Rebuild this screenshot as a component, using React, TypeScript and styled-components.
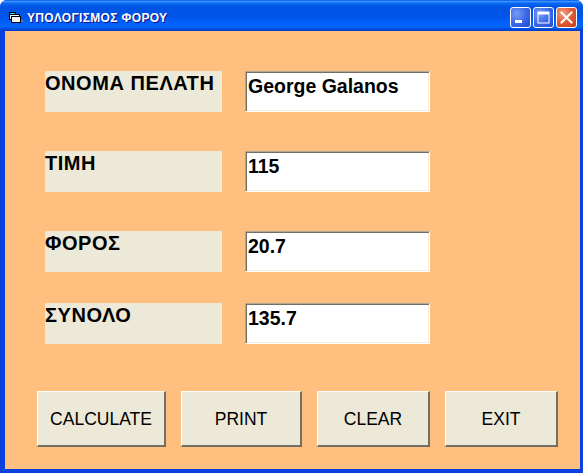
import React from "react";
import styled, { createGlobalStyle } from "styled-components";

const Global = createGlobalStyle`
  html, body { margin: 0; padding: 0; background: #fff; }
  * { box-sizing: border-box; }
`;

const Win = styled.div`
  width: 583px;
  height: 473px;
  display: flex;
  flex-direction: column;
  overflow: hidden;
  background: #0831d9;
  border-radius: 7px 7px 0 0;
  font-family: "Liberation Sans", Arial, sans-serif;
`;

const TitleBar = styled.div`
  height: 31px;
  flex: none;
  display: flex;
  align-items: center;
  padding: 4px 6px 0 8px;
  background: linear-gradient(180deg, #0058ee 0%, #3d95ff 5%, #0a6af0 10%, #0054e3 22%, #0055ea 55%, #0064ff 78%, #0061f7 88%, #0043cf 96%, #003dd7 100%);
`;

const TitleText = styled.span`
  margin-left: 3px;
  flex: 1;
  color: #fff;
  font-size: 12px;
  font-weight: 700;
  letter-spacing: 0.35px;
  text-shadow: 1px 1px 0 #0f1089;
  white-space: nowrap;
`;

const Controls = styled.div`
  display: flex;
  gap: 2px;
`;

const Ctl = styled.div<{ $close?: boolean }>`
  width: 21px;
  height: 21px;
  border: 1px solid #fff;
  border-radius: 3px;
  display: flex;
  background: ${(p) =>
    p.$close
      ? "radial-gradient(circle at 30% 30%, #f0a088 0%, #e2603c 45%, #c63a12 100%)"
      : "radial-gradient(circle at 30% 30%, #7a9cf5 0%, #3c6ae8 50%, #2148cf 100%)"};
`;

const Edge = styled.div`
  flex: 1;
  min-height: 0;
  padding: 0 3px 4px 5px;
  display: flex;
  background: #0a3fe0;
`;

const Client = styled.div`
  flex: 1;
  background: #ffc07f;
  padding: 40px 0 0 32px;
  display: flex;
  flex-direction: column;
`;

const Row = styled.div<{ $gap: number }>`
  display: flex;
  gap: 23px;
  height: 41px;
  margin-left: 8px;
  margin-bottom: ${(p) => p.$gap}px;
`;

const Label = styled.div`
  width: 177px;
  height: 41px;
  background: #ece9d8;
  color: #000;
  font-size: 20px;
  font-weight: 700;
  line-height: 24px;
  letter-spacing: 0.55px;
  white-space: nowrap;
`;

const Field = styled.div`
  width: 185px;
  height: 41px;
  background: #fff;
  border-top: 1px solid #aca899;
  border-left: 1px solid #aca899;
  border-right: 1px solid #fff;
  border-bottom: 1px solid #fff;
  box-shadow: inset 1px 1px 0 #716f64, inset -1px -1px 0 #f1efe2;
  color: #000;
  font-size: 19.5px;
  font-weight: 700;
  padding: 2px 0 0 2px;
  line-height: 24px;
  white-space: nowrap;
`;

const Buttons = styled.div`
  display: flex;
  margin-top: 6px;
`;

const Btn = styled.div<{ $w: number; $gap: number }>`
  width: ${(p) => p.$w}px;
  height: 56px;
  margin-right: ${(p) => p.$gap}px;
  background: #ece9d8;
  border-top: 1px solid #fff;
  border-left: 1px solid #fff;
  border-right: 2px solid #716f64;
  border-bottom: 2px solid #716f64;
  padding-top: 1px;
  display: flex;
  align-items: center;
  justify-content: center;
  color: #000;
  font-size: 17.5px;
`;

const buttons = [
  { t: "CALCULATE", w: 129, g: 15 },
  { t: "PRINT", w: 121, g: 15 },
  { t: "CLEAR", w: 113, g: 15 },
  { t: "EXIT", w: 113, g: 0 },
];

const rows = [
  { l: "ΟΝΟΜΑ ΠΕΛΑΤΗ", v: "George Galanos", g: 39 },
  { l: "ΤΙΜΗ", v: "115", g: 39 },
  { l: "ΦΟΡΟΣ", v: "20.7", g: 31 },
  { l: "ΣΥΝΟΛΟ", v: "135.7", g: 41 },
];

export default function App() {
  return (
    <>
      <Global />
      <Win>
        <TitleBar>
          <svg width="16" height="16" viewBox="0 0 16 16" shapeRendering="crispEdges">
            <path d="M1.5 2.5h6v2h-6z" fill="#3fd8e8" stroke="#000" />
            <path d="M1.5 4.5h10v8h-8v-3h-2z" fill="#fff" stroke="#000" />
            <path d="M3.5 6.5h9v6h-9z" fill="#f4f4f4" stroke="#000" />
            <rect x="13" y="10" width="2" height="2" fill="#6a7a9a" />
          </svg>
          <TitleText>ΥΠΟΛΟΓΙΣΜΟΣ ΦΟΡΟΥ</TitleText>
          <Controls>
            <Ctl>
              <svg width="19" height="19" viewBox="0 0 19 19">
                <rect x="4" y="12" width="7" height="3" fill="#fff" />
              </svg>
            </Ctl>
            <Ctl>
              <svg width="19" height="19" viewBox="0 0 19 19">
                <rect x="4" y="4" width="11" height="11" fill="none" stroke="#fff" strokeWidth="1" />
                <rect x="4" y="4" width="11" height="2.5" fill="#fff" />
              </svg>
            </Ctl>
            <Ctl $close>
              <svg width="19" height="19" viewBox="0 0 19 19">
                <path d="M4.5 4.5l10 10M14.5 4.5l-10 10" stroke="#fff" strokeWidth="2" strokeLinecap="square" />
              </svg>
            </Ctl>
          </Controls>
        </TitleBar>
        <Edge>
          <Client>
            {rows.map((r) => (
              <Row key={r.l} $gap={r.g}>
                <Label>{r.l}</Label>
                <Field>{r.v}</Field>
              </Row>
            ))}
            <Buttons>
              {buttons.map((b) => (
                <Btn key={b.t} $w={b.w} $gap={b.g}>
                  {b.t}
                </Btn>
              ))}
            </Buttons>
          </Client>
        </Edge>
      </Win>
    </>
  );
}
